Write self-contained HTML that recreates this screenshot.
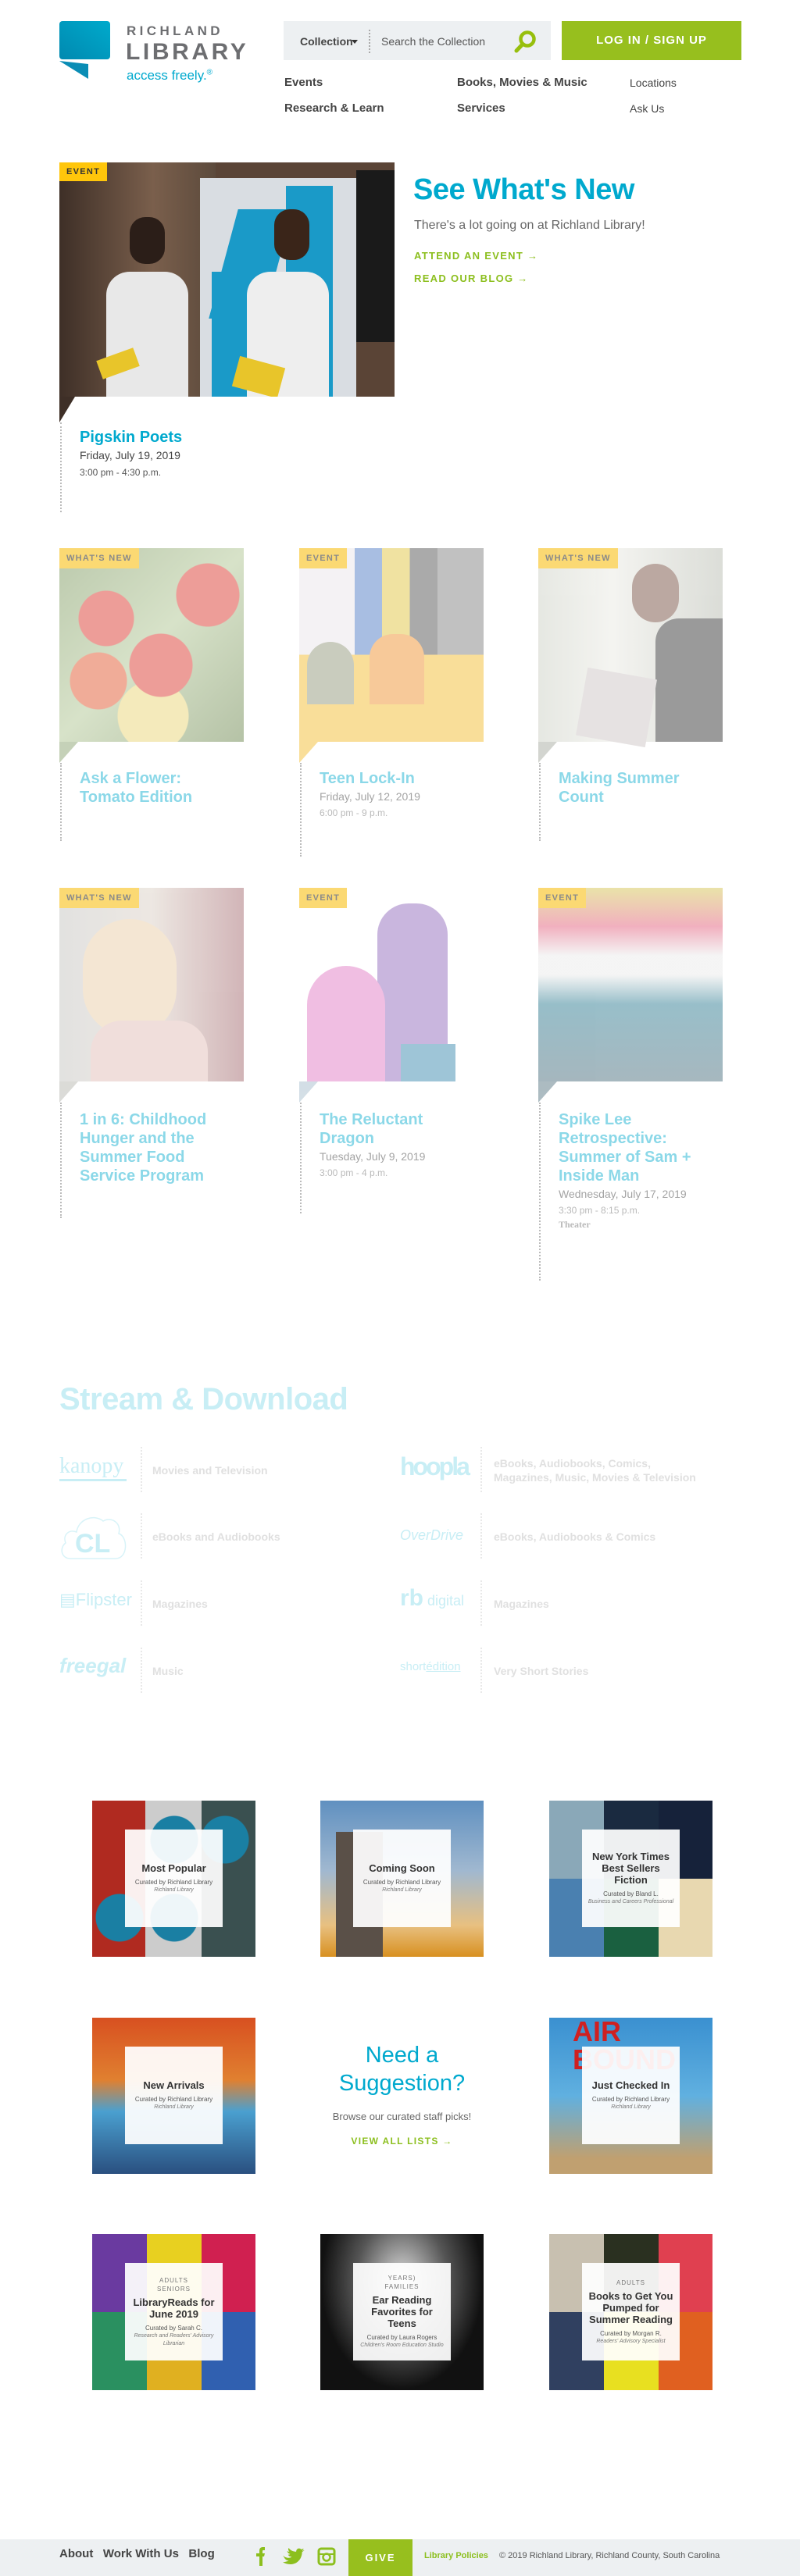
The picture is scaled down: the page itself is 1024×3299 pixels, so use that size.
<!DOCTYPE html>
<html><head><meta charset="utf-8"><style>
*{margin:0;padding:0;box-sizing:border-box}
body{width:1024px;height:3299px;position:relative;background:#fff;font-family:"Liberation Sans",sans-serif;overflow:hidden}
.a{position:absolute}
.nav{font-size:15px;font-weight:bold;color:#444}
.tag{position:absolute;left:0;top:0;height:26px;padding:0 9px;font-size:11px;font-weight:bold;letter-spacing:1.3px;line-height:26px;color:#555;background:#ffc60b}
.card .img{position:absolute;left:0;top:0;width:236px;height:248px}
.tri{position:absolute;left:0;width:0;height:0;border-right:24px solid transparent}
.dot{position:absolute;left:1px;border-left:2px dotted #bbb}
.ct{position:absolute;left:26px;font-size:20px;font-weight:bold;color:#00a9ce;line-height:24px;width:200px}
.cd{font-size:14px;color:#555;font-weight:normal;line-height:22px}
.ctime{font-size:12px;color:#666;font-weight:normal;line-height:20px}
.fade{opacity:.45}
.sd{position:absolute;font-size:14px;font-weight:bold;color:#e0e0e0;line-height:18px}
.sep{position:absolute;width:0;height:58px;border-left:2px dotted #e8e8e8}
.lg{position:absolute;color:#c8eef5;font-size:26px}
.tile{position:absolute;width:209px;height:200px;overflow:hidden}
.ov{position:absolute;left:42px;top:37px;width:125px;height:125px;background:rgba(255,255,255,.93);text-align:center;display:flex;flex-direction:column;justify-content:center;align-items:center;padding:4px}
.ov b{font-size:12px;color:#333;line-height:15px;display:block}
.ov s{text-decoration:none;font-size:8px;color:#555;line-height:11px;display:block;margin-top:5px}
.ov i{font-size:7px;color:#777;line-height:10px;display:block}
.ov u{text-decoration:none;font-size:8px;color:#777;letter-spacing:1px;line-height:11px;display:block}
</style></head><body>

<!-- header -->
<svg class="a" style="left:76px;top:27px" width="66" height="75" viewBox="0 0 66 75"><defs><linearGradient id="lg1" x1="0" y1="1" x2="1" y2="0"><stop offset="0" stop-color="#0089b0"/><stop offset="1" stop-color="#00aacc"/></linearGradient></defs><rect x="0" y="0" width="65" height="49" rx="4" fill="url(#lg1)"/><polygon points="0,51 37,55 37,74" fill="#0a8db5"/></svg>
<div class="a" style="left:162px;top:30px;font-size:17px;letter-spacing:4.4px;color:#6d6e71;font-weight:bold">RICHLAND</div>
<div class="a" style="left:161px;top:50px;font-size:30px;letter-spacing:3.6px;color:#6d6e71;font-weight:bold">LIBRARY</div>
<div class="a" style="left:162px;top:87px;font-size:17px;color:#00a9ce">access freely.<sup style="font-size:10px">®</sup></div>

<div class="a" style="left:363px;top:27px;width:342px;height:50px;background:#edf0f2"></div>
<div class="a" style="left:384px;top:45px;font-size:14px;font-weight:bold;color:#444">Collection</div>
<div class="a" style="left:450px;top:51px;border:4px solid transparent;border-top:5px solid #333;border-bottom:0"></div>
<div class="a" style="left:472px;top:38px;height:30px;border-left:2px dotted #aaa"></div>
<div class="a" style="left:488px;top:45px;font-size:14px;color:#555">Search the Collection</div>
<svg class="a" style="left:656px;top:38px" width="32" height="30" viewBox="0 0 32 30"><circle cx="19" cy="12" r="8.5" fill="none" stroke="#97bf0d" stroke-width="4.5"/><line x1="13" y1="18.5" x2="5" y2="27" stroke="#97bf0d" stroke-width="5" stroke-linecap="round"/></svg>
<div class="a" style="left:719px;top:27px;width:230px;height:50px;background:#97bf1e;color:#fff;font-weight:bold;font-size:15px;letter-spacing:1px;text-align:center;line-height:50px">LOG IN / SIGN UP</div>

<div class="a nav" style="left:364px;top:97px">Events</div>
<div class="a nav" style="left:364px;top:130px">Research &amp; Learn</div>
<div class="a nav" style="left:585px;top:97px">Books, Movies &amp; Music</div>
<div class="a nav" style="left:585px;top:130px">Services</div>
<div class="a" style="left:806px;top:98px;font-size:14px;color:#444">Locations</div>
<div class="a" style="left:806px;top:131px;font-size:14px;color:#444">Ask Us</div>

<!-- hero -->
<div class="a" style="left:76px;top:208px;width:429px;height:300px;overflow:hidden;background:#5a4436">
 <div class="a" style="left:0;top:0;width:200px;height:300px;background:linear-gradient(90deg,#3e2f27,#7a5f4c 60%,#5c4a3c)"></div>
 <div class="a" style="left:180px;top:20px;width:200px;height:280px;background:#d9dde2"></div>
 <div class="a" style="left:210px;top:60px;width:70px;height:140px;background:#1a9ac8;transform:skewX(-15deg)"></div>
 <div class="a" style="left:290px;top:30px;width:60px;height:270px;background:#1a9ac8"></div>
 <div class="a" style="left:195px;top:140px;width:60px;height:160px;background:#1a9ac8"></div>
 <div class="a" style="left:380px;top:10px;width:49px;height:220px;background:#1a1a1a"></div>
 <div class="a" style="left:60px;top:140px;width:105px;height:160px;background:#e8e8e8;border-radius:30px 30px 0 0"></div>
 <div class="a" style="left:90px;top:70px;width:45px;height:60px;background:#2b1e18;border-radius:20px"></div>
 <div class="a" style="left:240px;top:140px;width:105px;height:160px;background:#eee;border-radius:30px 30px 0 0"></div>
 <div class="a" style="left:275px;top:60px;width:45px;height:65px;background:#3a2519;border-radius:20px"></div>
 <div class="a" style="left:50px;top:245px;width:50px;height:25px;background:#e8c52a;transform:rotate(-20deg)"></div>
 <div class="a" style="left:225px;top:255px;width:60px;height:40px;background:#e8c52a;transform:rotate(15deg)"></div>
</div>
<div class="tri" style="left:76px;top:508px;border-top:33px solid #3e2f27;border-right-width:20px"></div>
<div class="tag" style="left:76px;top:208px;height:24px;line-height:24px;color:#333">EVENT</div>
<div class="dot" style="left:77px;top:541px;height:115px"></div>
<div class="a" style="left:102px;top:549px;font-size:20px;font-weight:bold;color:#00a9ce">Pigskin Poets</div>
<div class="a" style="left:102px;top:575px;font-size:14px;color:#444">Friday, July 19, 2019</div>
<div class="a" style="left:102px;top:598px;font-size:12px;color:#555">3:00 pm - 4:30 p.m.</div>

<div class="a" style="left:529px;top:222px;font-size:38px;font-weight:bold;color:#00a9ce;letter-spacing:-0.5px">See What's New</div>
<div class="a" style="left:530px;top:280px;font-size:16px;color:#666">There's a lot going on at Richland Library!</div>
<div class="a" style="left:530px;top:320px;font-size:13px;font-weight:bold;color:#8cbf1e;letter-spacing:1.3px">ATTEND AN EVENT &#8594;</div>
<div class="a" style="left:530px;top:349px;font-size:13px;font-weight:bold;color:#8cbf1e;letter-spacing:1.3px">READ OUR BLOG &#8594;</div>

<!-- row 1 -->
<div class="a card" style="left:76px;top:702px;width:236px;height:380px">
 <div class="fade"><div class="img" style="background:radial-gradient(circle at 60px 90px,#d8281c 35px,transparent 36px),radial-gradient(circle at 190px 60px,#d8281c 40px,transparent 41px),radial-gradient(circle at 130px 150px,#d8281c 40px,transparent 41px),radial-gradient(circle at 50px 170px,#e04a1c 36px,transparent 37px),radial-gradient(circle at 120px 215px,#e8d26a 45px,transparent 46px),linear-gradient(135deg,#6b8a4a,#a8c088 50%,#5d7a3c)"></div>
 <div class="tri" style="top:248px;border-top:27px solid #7f9a63"></div></div>
 <div class="tag" style="background:#fbd973;color:#8a8a8a">WHAT'S NEW</div>
 <div class="dot" style="top:275px;height:100px"></div>
 <div class="ct fade" style="top:283px">Ask a Flower: Tomato Edition</div>
</div>
<div class="a card" style="left:383px;top:702px;width:236px;height:400px">
 <div class="fade"><div class="img" style="background:linear-gradient(180deg,transparent 55%,#f2b720 55%),linear-gradient(90deg,#e8e4e8 0 30%,#4070c0 30% 45%,#e0c030 45% 60%,#444 60% 75%,#777 75%);"></div>
 <div class="a" style="left:90px;top:110px;width:70px;height:90px;background:#ee8a20;border-radius:30px 30px 0 0"></div>
 <div class="a" style="left:10px;top:120px;width:60px;height:80px;background:#8a9070;border-radius:30px 30px 0 0"></div>
 <div class="tri" style="top:248px;border-top:27px solid #f2b720"></div></div>
 <div class="tag" style="background:#fbd973;color:#8a8a8a">EVENT</div>
 <div class="dot" style="top:275px;height:120px"></div>
 <div class="ct fade" style="top:283px">Teen Lock-In<div class="cd" style="color:#333">Friday, July 12, 2019</div><div class="ctime">6:00 pm - 9 p.m.</div></div>
</div>
<div class="a card" style="left:689px;top:702px;width:236px;height:380px">
 <div class="fade"><div class="img" style="background:linear-gradient(90deg,#c8ccc0,#e8e8e0 40%,#b0b4a8)"></div>
 <div class="a" style="left:150px;top:90px;width:86px;height:158px;background:#222;border-radius:30px 0 0 0"></div>
 <div class="a" style="left:120px;top:20px;width:60px;height:75px;background:#6a4030;border-radius:30px"></div>
 <div class="a" style="left:55px;top:160px;width:90px;height:88px;background:#c8c0c0;transform:rotate(10deg)"></div>
 <div class="tri" style="top:248px;border-top:27px solid #a0a498"></div></div>
 <div class="tag" style="background:#fbd973;color:#8a8a8a">WHAT'S NEW</div>
 <div class="dot" style="top:275px;height:100px"></div>
 <div class="ct fade" style="top:283px">Making Summer Count</div>
</div>

<!-- row 2 -->
<div class="a card" style="left:76px;top:1137px;width:236px;height:430px">
 <div class="fade"><div class="img" style="background:linear-gradient(90deg,#c0c0bc,#d8ccc0 50%,#9a5a60)"></div>
 <div class="a" style="left:30px;top:40px;width:120px;height:150px;background:#e8c8a0;border-radius:60px"></div>
 <div class="a" style="left:40px;top:170px;width:150px;height:78px;background:#e0b8b0;border-radius:40px 40px 0 0"></div>
 <div class="tri" style="top:248px;border-top:27px solid #b0b0a8"></div></div>
 <div class="tag" style="background:#fbd973;color:#8a8a8a">WHAT'S NEW</div>
 <div class="dot" style="top:275px;height:148px"></div>
 <div class="ct fade" style="top:285px">1 in 6: Childhood Hunger and the Summer Food Service Program</div>
</div>
<div class="a card" style="left:383px;top:1137px;width:236px;height:420px">
 <div class="fade"><div class="img" style="background:#fff"></div>
 <div class="a" style="left:100px;top:20px;width:90px;height:228px;background:#8a60b8;border-radius:40px 40px 0 0"></div>
 <div class="a" style="left:10px;top:100px;width:100px;height:148px;background:#e070c0;border-radius:50px 50px 0 0"></div>
 <div class="a" style="left:130px;top:200px;width:70px;height:48px;background:#2a80a8"></div>
 <div class="tri" style="top:248px;border-top:27px solid #a0b8c8"></div></div>
 <div class="tag" style="background:#fbd973;color:#8a8a8a">EVENT</div>
 <div class="dot" style="top:275px;height:142px"></div>
 <div class="ct fade" style="top:285px">The Reluctant Dragon<div class="cd" style="color:#333">Tuesday, July 9, 2019</div><div class="ctime">3:00 pm - 4 p.m.</div></div>
</div>
<div class="a card" style="left:689px;top:1137px;width:236px;height:510px">
 <div class="fade"><div class="img" style="background:linear-gradient(180deg,#d0c040 0,#e05070 20%,#e8e8e8 35%,#e8e8e8 45%,#1a7088 60%,#3a6070 100%)"></div>
 <div class="tri" style="top:248px;border-top:27px solid #4a6a78"></div></div>
 <div class="tag" style="background:#fbd973;color:#8a8a8a">EVENT</div>
 <div class="dot" style="top:275px;height:228px"></div>
 <div class="ct fade" style="top:285px">Spike Lee Retrospective: Summer of Sam + Inside Man<div class="cd" style="color:#333">Wednesday, July 17, 2019</div><div class="ctime">3:30 pm - 8:15 p.m.</div><div class="ctime" style="font-family:'Liberation Serif',serif;font-weight:bold;line-height:16px">Theater</div></div>
</div>

<!-- stream -->
<div class="a" style="left:76px;top:1770px;font-size:40px;font-weight:bold;color:#c8eef5;letter-spacing:-0.5px">Stream &amp; Download</div>

<div class="lg" style="left:76px;top:1862px;font-family:'Liberation Serif',serif;font-size:28px">kanopy</div>
<div class="a" style="left:76px;top:1894px;width:86px;height:3px;background:#c8eef5"></div>
<div class="sep" style="left:180px;top:1853px"></div>
<div class="sd" style="left:195px;top:1874px">Movies and Television</div>

<svg class="a" style="left:76px;top:1938px" width="88" height="60" viewBox="0 0 88 60"><path d="M14 58 C2 58 0 44 8 38 C4 28 12 20 22 24 C24 8 44 0 56 10 C66 4 80 12 76 26 C88 30 88 58 72 58 Z" fill="none" stroke="#d8f3f8" stroke-width="1.5"/><text x="20" y="50" font-family="Liberation Sans" font-weight="bold" font-size="34" fill="#c8eef5">CL</text></svg>
<div class="sep" style="left:180px;top:1938px"></div>
<div class="sd" style="left:195px;top:1959px">eBooks and Audiobooks</div>

<div class="lg" style="left:76px;top:2036px;font-size:22px">&#9636;Flipster</div>
<div class="sep" style="left:180px;top:2024px"></div>
<div class="sd" style="left:195px;top:2045px">Magazines</div>

<div class="lg" style="left:76px;top:2118px;font-size:26px;font-weight:bold;font-style:italic">freegal</div>
<div class="sep" style="left:180px;top:2110px"></div>
<div class="sd" style="left:195px;top:2131px">Music</div>

<div class="lg" style="left:512px;top:1860px;font-size:32px;font-weight:bold;letter-spacing:-3px">hoopla</div>
<div class="sep" style="left:615px;top:1853px"></div>
<div class="sd" style="left:632px;top:1865px">eBooks, Audiobooks, Comics,<br>Magazines, Music, Movies &amp; Television</div>

<div class="lg" style="left:512px;top:1956px;font-size:18px;font-style:italic">OverDrive</div>
<div class="sep" style="left:615px;top:1938px"></div>
<div class="sd" style="left:632px;top:1959px">eBooks, Audiobooks &amp; Comics</div>

<div class="lg" style="left:512px;top:2030px;font-size:30px;font-weight:bold">rb<span style="font-size:18px;font-weight:normal"> digital</span></div>
<div class="sep" style="left:615px;top:2024px"></div>
<div class="sd" style="left:632px;top:2045px">Magazines</div>

<div class="lg" style="left:512px;top:2126px;font-size:15px">short<u>édition</u></div>
<div class="sep" style="left:615px;top:2110px"></div>
<div class="sd" style="left:632px;top:2131px">Very Short Stories</div>

<!-- lists -->
<div class="tile" style="left:118px;top:2306px;background:radial-gradient(circle at 105px 50px,#1a7fa3 30px,transparent 31px),radial-gradient(circle at 170px 50px,#1a7fa3 30px,transparent 31px),radial-gradient(circle at 35px 150px,#1a7fa3 30px,transparent 31px),radial-gradient(circle at 105px 150px,#1a7fa3 30px,transparent 31px),linear-gradient(90deg,#b02a20 0 68px,#ccc 68px 140px,#3a5050 140px)"><div class="ov"><b style="font-size:13px">Most Popular</b><s>Curated by Richland Library</s><i>Richland Library</i></div></div>
<div class="tile" style="left:410px;top:2306px;background:linear-gradient(180deg,#6090c0,#a0b8d0 45%,#e8c080 80%,#d89020)"><div class="a" style="left:20px;top:40px;width:60px;height:160px;background:#5a5048"></div><div class="ov"><b style="font-size:13px">Coming Soon</b><s>Curated by Richland Library</s><i>Richland Library</i></div></div>
<div class="tile" style="left:703px;top:2306px;background:linear-gradient(90deg,#8aa8b8 0 70px,#1a2a40 70px 140px,#16223a 140px);"><div class="a" style="left:0;top:100px;width:209px;height:100px;background:linear-gradient(90deg,#4a80b0 0 70px,#1a6040 70px 140px,#e8d8b0 140px)"></div><div class="ov"><b style="font-size:13px">New York Times Best Sellers Fiction</b><s>Curated by Bland L.</s><i>Business and Careers Professional</i></div></div>

<div class="tile" style="left:118px;top:2584px;background:linear-gradient(180deg,#d85020 0,#e08030 40%,#4aa0d0 60%,#2a5080)"><div class="ov"><b style="font-size:13px">New Arrivals</b><s>Curated by Richland Library</s><i>Richland Library</i></div></div>
<div class="a" style="left:410px;top:2614px;width:209px;text-align:center;font-size:29px;color:#00a9ce;line-height:36px">Need a<br>Suggestion?</div>
<div class="a" style="left:400px;top:2703px;width:229px;text-align:center;font-size:13px;color:#666">Browse our curated staff picks!</div>
<div class="a" style="left:410px;top:2735px;width:209px;text-align:center;font-size:12px;font-weight:bold;color:#8cbf1e;letter-spacing:1.3px">VIEW ALL LISTS &#8594;</div>
<div class="tile" style="left:703px;top:2584px;background:linear-gradient(180deg,#3a90d0 0,#60b0e0 50%,#c0a070 90%)"><div class="a" style="left:30px;top:0;font-size:36px;font-weight:bold;color:#d02020;line-height:36px">AIR<br>BOUND</div><div class="ov"><b style="font-size:13px">Just Checked In</b><s>Curated by Richland Library</s><i>Richland Library</i></div></div>

<div class="tile" style="left:118px;top:2861px;background:linear-gradient(90deg,#6a3aa0 0 70px,#e8d020 70px 140px,#d02050 140px)"><div class="a" style="left:0;top:100px;width:209px;height:100px;background:linear-gradient(90deg,#2a9060 0 70px,#e0b020 70px 140px,#3060b0 140px)"></div><div class="ov"><u>ADULTS</u><u>SENIORS</u><b style="font-size:13px;margin-top:4px">LibraryReads for June 2019</b><s>Curated by Sarah C.</s><i>Research and Readers' Advisory Librarian</i></div></div>
<div class="tile" style="left:410px;top:2861px;background:radial-gradient(ellipse at 50% 30%,#ddd 0,#555 40%,#111 70%)"><div class="ov"><u>YEARS)</u><u>FAMILIES</u><b style="font-size:13px;margin-top:4px">Ear Reading Favorites for Teens</b><s>Curated by Laura Rogers</s><i>Children's Room Education Studio</i></div></div>
<div class="tile" style="left:703px;top:2861px;background:linear-gradient(90deg,#c8c0b0 0 70px,#2a3020 70px 140px,#e04050 140px)"><div class="a" style="left:0;top:100px;width:209px;height:100px;background:linear-gradient(90deg,#304060 0 70px,#e8e020 70px 140px,#e06020 140px)"></div><div class="ov"><u>ADULTS</u><b style="font-size:13px;margin-top:4px">Books to Get You Pumped for Summer Reading</b><s>Curated by Morgan R.</s><i>Readers' Advisory Specialist</i></div></div>

<!-- footer -->
<div class="a" style="left:0;top:3252px;width:1024px;height:47px;background:#edf0f2"></div>
<div class="a" style="left:76px;top:3262px;font-size:15px;font-weight:bold;color:#444;word-spacing:0">About&nbsp;&nbsp; Work With Us&nbsp;&nbsp; Blog</div>
<svg class="a" style="left:324px;top:3262px" width="110" height="24" viewBox="0 0 110 24"><path d="M8 24 V12 H4 V8 H8 V5 C8 1 10 0 13 0 H15 V4 H13 C12 4 12 5 12 6 V8 H15 L14 12 H12 V24 Z" fill="#8cbf1e"/><path d="M40 8 C44 12 50 12 52 10 C50 10 48 9 47 7 C48 7 49 7 50 6 C48 6 46 4 46 2 C47 3 48 3 49 3 C47 1 47 -1 48 -2 C50 1 54 3 58 3 C58 -1 62 -3 65 0 C66 0 67 -1 68 -1 C68 0 67 1 66 2 C67 2 68 1 69 1 C68 2 67 3 66 3 C66 12 60 20 50 20 C46 20 43 19 40 17 C44 17 46 16 48 15 C45 15 43 13 42 11" fill="#8cbf1e" transform="translate(0,3) scale(0.95)"/><rect x="84" y="2" width="20" height="20" rx="3" fill="none" stroke="#8cbf1e" stroke-width="3"/><circle cx="94" cy="13" r="4.5" fill="none" stroke="#8cbf1e" stroke-width="2.5"/><line x1="84" y1="9" x2="104" y2="9" stroke="#8cbf1e" stroke-width="2"/></svg>
<div class="a" style="left:446px;top:3252px;width:82px;height:47px;background:#97bf1e;color:#fff;font-weight:bold;font-size:13px;letter-spacing:2px;text-align:center;line-height:47px">GIVE</div>
<div class="a" style="left:543px;top:3267px;font-size:11px;font-weight:bold;color:#8cbf1e">Library Policies</div>
<div class="a" style="left:639px;top:3267px;font-size:11px;color:#555">© 2019 Richland Library, Richland County, South Carolina</div>
</body></html>
